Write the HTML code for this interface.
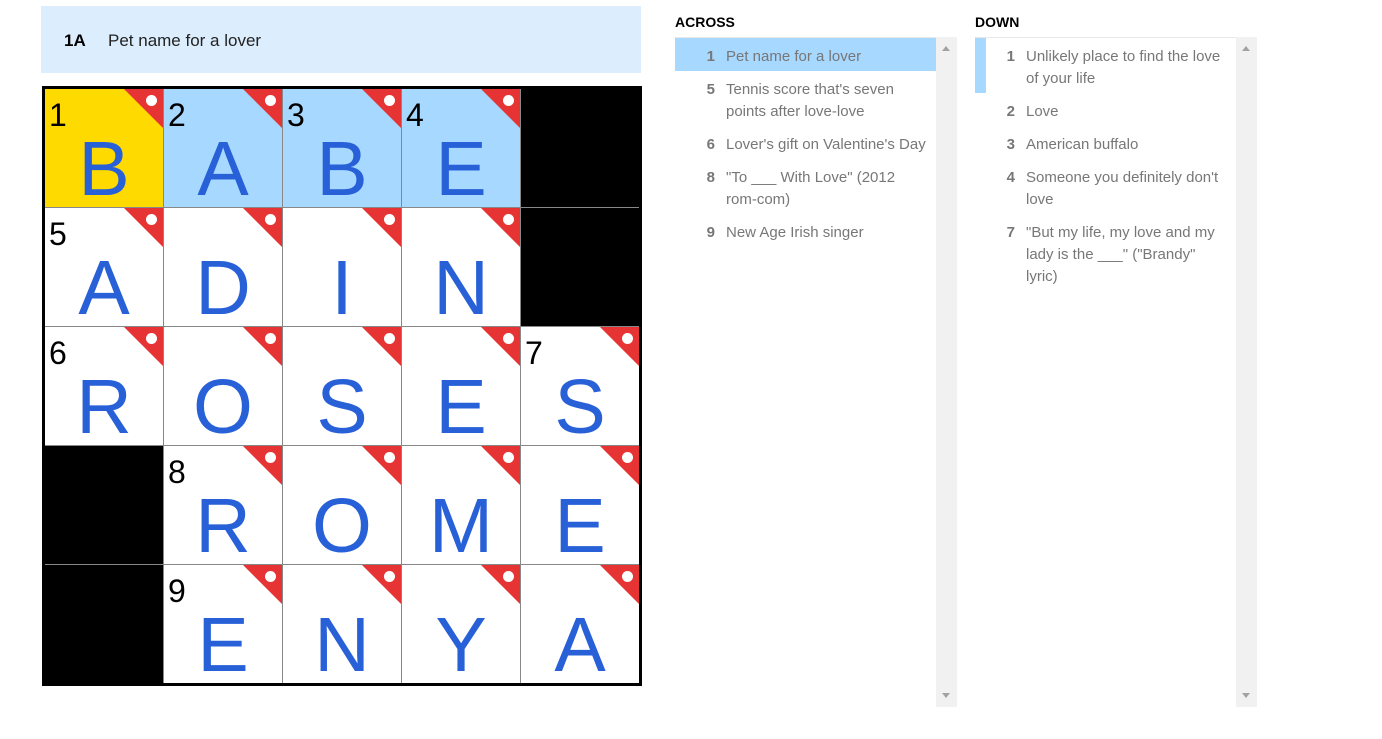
<!DOCTYPE html>
<html><head><style>
body{margin:0;background:#fff;font-family:"Liberation Sans",sans-serif;width:1382px;height:739px;position:relative;overflow:hidden}
.bar{position:absolute;left:41px;top:6px;width:600px;height:67px;background:#dcedfd;font-size:17px;line-height:69px}
.bar b{position:absolute;left:23px}
.bar span{position:absolute;left:67px;color:#222}
.grid{position:absolute;left:42px;top:86px;width:594px;height:594px;border:3px solid #000;background:#888;display:grid;grid-template-columns:repeat(5,118px);grid-template-rows:repeat(5,118px);gap:1px}
.c{background:#fff;position:relative;overflow:hidden}
.c.k{background:#000}.c.h{background:#a7d8ff}.c.y{background:#ffda00}
.c .n{position:absolute;left:4px;top:10px;font-size:32px;line-height:32px;color:#000}
.c .l{position:absolute;left:0;right:0;bottom:-1px;text-align:center;font-size:77px;line-height:77px;color:#2860d8}
.c .t{position:absolute;right:0;top:0;width:0;height:0;border-top:39px solid #e63333;border-left:39px solid transparent}
.c .d{position:absolute;right:6px;top:6px;width:11px;height:11px;border-radius:50%;background:#fff}
h3{position:absolute;margin:0;top:14px;font-size:14px;font-weight:bold;color:#000}
.list{position:absolute;top:37px;width:261px;height:670px;border-top:1px solid #e8e8e8}
.sb{position:absolute;top:37px;width:21px;height:670px;background:#f1f1f1}
.sb:before{content:"";position:absolute;left:6px;top:9px;border:4px solid transparent;border-bottom:5px solid #a3a3a3;border-top:0}
.sb:after{content:"";position:absolute;left:6px;bottom:9px;border:4px solid transparent;border-top:5px solid #a3a3a3;border-bottom:0}
.cl{position:relative;padding:6px 10px 5px 51px;font-size:15px;line-height:22px;color:#777}
.cl span{position:relative;top:2px}
.cl b{position:absolute;left:26px;top:8px;width:14px;text-align:right;color:#777}
.cl.s{background:#a7d8ff}
.cl.o:before{content:"";position:absolute;left:0;top:0;width:11px;height:55px;background:#a7d8ff}
</style></head><body>
<div class="bar"><b>1A</b><span>Pet name for a lover</span></div>
<div class="grid">
<div class="c y"><div class="t"></div><div class="d"></div><div class="n">1</div><div class="l">B</div></div>
<div class="c h"><div class="t"></div><div class="d"></div><div class="n">2</div><div class="l">A</div></div>
<div class="c h"><div class="t"></div><div class="d"></div><div class="n">3</div><div class="l">B</div></div>
<div class="c h"><div class="t"></div><div class="d"></div><div class="n">4</div><div class="l">E</div></div>
<div class="c k"></div>
<div class="c"><div class="t"></div><div class="d"></div><div class="n">5</div><div class="l">A</div></div>
<div class="c"><div class="t"></div><div class="d"></div><div class="l">D</div></div>
<div class="c"><div class="t"></div><div class="d"></div><div class="l">I</div></div>
<div class="c"><div class="t"></div><div class="d"></div><div class="l">N</div></div>
<div class="c k"></div>
<div class="c"><div class="t"></div><div class="d"></div><div class="n">6</div><div class="l">R</div></div>
<div class="c"><div class="t"></div><div class="d"></div><div class="l">O</div></div>
<div class="c"><div class="t"></div><div class="d"></div><div class="l">S</div></div>
<div class="c"><div class="t"></div><div class="d"></div><div class="l">E</div></div>
<div class="c"><div class="t"></div><div class="d"></div><div class="n">7</div><div class="l">S</div></div>
<div class="c k"></div>
<div class="c"><div class="t"></div><div class="d"></div><div class="n">8</div><div class="l">R</div></div>
<div class="c"><div class="t"></div><div class="d"></div><div class="l">O</div></div>
<div class="c"><div class="t"></div><div class="d"></div><div class="l">M</div></div>
<div class="c"><div class="t"></div><div class="d"></div><div class="l">E</div></div>
<div class="c k"></div>
<div class="c"><div class="t"></div><div class="d"></div><div class="n">9</div><div class="l">E</div></div>
<div class="c"><div class="t"></div><div class="d"></div><div class="l">N</div></div>
<div class="c"><div class="t"></div><div class="d"></div><div class="l">Y</div></div>
<div class="c"><div class="t"></div><div class="d"></div><div class="l">A</div></div>
</div>
<h3 style="left:675px">ACROSS</h3>
<div class="list" style="left:675px">
<div class="cl s"><b>1</b><span>Pet name for a lover</span></div>
<div class="cl"><b>5</b><span>Tennis score that's seven points after love-love</span></div>
<div class="cl"><b>6</b><span>Lover's gift on Valentine's Day</span></div>
<div class="cl"><b>8</b><span>"To ___ With Love" (2012 rom-com)</span></div>
<div class="cl"><b>9</b><span>New Age Irish singer</span></div>
</div>
<div class="sb" style="left:936px"></div>
<h3 style="left:975px">DOWN</h3>
<div class="list" style="left:975px">
<div class="cl o"><b>1</b><span>Unlikely place to find the love of your life</span></div>
<div class="cl"><b>2</b><span>Love</span></div>
<div class="cl"><b>3</b><span>American buffalo</span></div>
<div class="cl"><b>4</b><span>Someone you definitely don't love</span></div>
<div class="cl"><b>7</b><span>"But my life, my love and my lady is the ___" ("Brandy" lyric)</span></div>
</div>
<div class="sb" style="left:1236px"></div>
</body></html>
